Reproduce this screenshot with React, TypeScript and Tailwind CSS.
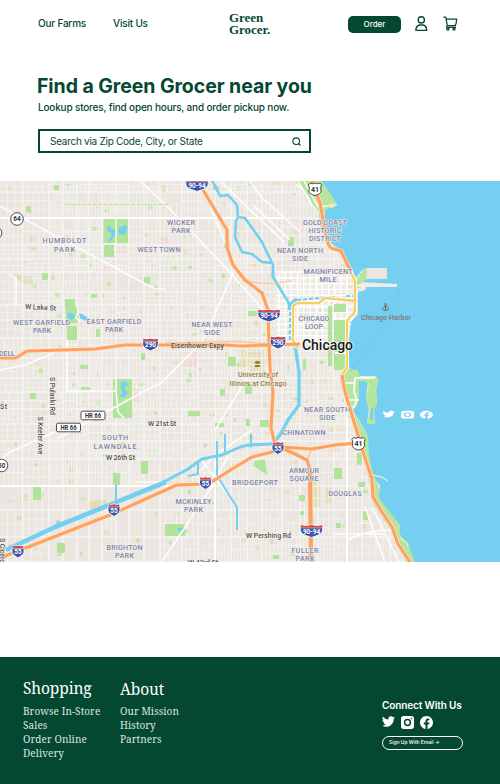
import React from "react";

const SANS = "font-['Inter','Liberation_Sans',sans-serif]";
const SERIF = "font-['Noto_Serif','DejaVu_Serif',serif]";

/* ---------- icons ---------- */

const TWITTER =
  "M23.95 4.57a10 10 0 0 1-2.82.77 4.96 4.96 0 0 0 2.16-2.72c-.95.55-2 .96-3.12 1.18a4.92 4.92 0 0 0-8.38 4.49C7.69 8.09 4.07 6.13 1.64 3.16a4.93 4.93 0 0 0 1.52 6.57 4.9 4.9 0 0 1-2.23-.61v.06c0 2.39 1.7 4.38 3.95 4.83a5 5 0 0 1-2.21.08 4.94 4.94 0 0 0 4.6 3.42A9.87 9.87 0 0 1 0 19.54a14 14 0 0 0 7.55 2.21c9.05 0 14-7.5 14-13.98l-.02-.64a9.9 9.9 0 0 0 2.42-2.56z";
const FACEBOOK =
  "M24 12.07C24 5.4 18.63 0 12 0S0 5.4 0 12.07C0 18.1 4.39 23.09 10.13 24v-8.44H7.08v-3.49h3.05V9.41c0-3.03 1.79-4.7 4.53-4.7 1.31 0 2.68.24 2.68.24v2.97h-1.51c-1.49 0-1.95.93-1.95 1.89v2.26h3.32l-.53 3.49h-2.79V24C19.61 23.09 24 18.1 24 12.07z";
const INSTAGRAM =
  "M5 0h14a5 5 0 0 1 5 5v14a5 5 0 0 1-5 5H5a5 5 0 0 1-5-5V5a5 5 0 0 1 5-5zM12 5.3a6.7 6.7 0 1 0 0 13.4 6.7 6.7 0 0 0 0-13.4zm0 2.7a4 4 0 1 1 0 8 4 4 0 0 1 0-8zM19.3 3.2a1.5 1.5 0 1 0 0 3 1.5 1.5 0 0 0 0-3z";

function Social({ d, className }: { d: string; className: string }) {
  return (
    <svg viewBox="0 0 24 24" preserveAspectRatio="none" className={className}>
      <path d={d} fill="#fff" fillRule="evenodd" />
    </svg>
  );
}

function UserIcon() {
  return (
    <svg width="13" height="16" viewBox="0 0 13 16" fill="none" stroke="#044832" strokeWidth="1.4">
      <circle cx="6.3" cy="3.900" r="3.100" />
      <path d="M4.500 9h3.600c2.300.6 3.600 2.600 3.600 5.400H.9C.9 11.600 2.200 9.600 4.500 9z" strokeLinejoin="round" />
    </svg>
  );
}

function CartIcon() {
  return (
    <svg width="15" height="15" viewBox="0 0 15 15" fill="none" stroke="#044832" strokeWidth="1.25" strokeLinecap="round" strokeLinejoin="round">
      <path d="M.8 1h2l1.500 8.500h8.200M3.200 3h10.600l-.8 4.900-1 1.600M4.300 9.500c-1.200.4-1.200 1.800 0 1.900h8.200" />
      <circle cx="4.800" cy="12.900" r="1.100" />
      <circle cx="11" cy="12.900" r="1.100" />
    </svg>
  );
}

/* ---------- map data ---------- */

function rng(seed: number) {
  let s = seed;
  return () => {
    s = (s * 16807) % 2147483647;
    return s / 2147483647;
  };
}

const rand = rng(4217);
const COLS = [0, 22.6, 49, 63, 77, 89, 102, 116, 129, 144, 160, 182, 198, 215, 231, 247, 262, 282, 300, 318, 334, 347, 362, 390, 415];
const ROWS = [181, 192, 218, 245, 259, 272, 292, 305, 320, 338, 358, 378, 392, 409, 424, 441, 459, 486, 510, 537, 562];

let streets = "";
const parks: { x: number; y: number; w: number; h: number; c: string }[] = [];
for (let i = 0; i < COLS.length - 1; i++) {
  for (let j = 0; j < ROWS.length - 1; j++) {
    const [x0, x1, y0, y1] = [COLS[i], COLS[i + 1], ROWS[j], ROWS[j + 1]];
    const industrial = (x0 < 160 && y0 > 480) || (x0 > 100 && x0 < 150 && y0 > 265 && y0 < 292);
    if (!industrial || rand() > 0.75) {
      const nx = 3 + Math.floor(rand() * 3);
      for (let k = 1; k < nx; k++) {
        const x = (x0 + ((x1 - x0) * k) / nx).toFixed(1);
        const a = y0 + (rand() > 0.75 ? (y1 - y0) * 0.4 : 0);
        streets += `M${x} ${a.toFixed(1)}V${y1}`;
      }
      const ny = 2 + Math.floor(rand() * 2);
      for (let k = 1; k < ny; k++) {
        streets += `M${x0} ${(y0 + ((y1 - y0) * k) / ny).toFixed(1)}H${x1}`;
      }
    }
    if (rand() > 0.5) {
      const t = rand();
      parks.push({
        x: x0 + rand() * (x1 - x0 - 5),
        y: y0 + rand() * (y1 - y0 - 5),
        w: 2 + rand() * 3.5,
        h: 2 + rand() * 3,
        c: t > 0.6 ? "#bfe6a8" : t > 0.12 ? "#e4dcb8" : "#efd9d5",
      });
    }
  }
}

const DOWNTOWN =
  Array.from({ length: 12 }, (_, i) => `M${279 + i * 6.2} 272V345`).join("") +
  Array.from({ length: 13 }, (_, i) => `M276 ${272 + i * 5.8}H356`).join("");

const GREENS: [number, number, number, number][] = [
  [103.5, 219, 24.5, 24], [104, 245, 10, 12], [65, 299, 10, 10], [26, 206, 5, 6],
  [54, 185, 5, 5], [42, 273, 6, 7], [144, 277, 6, 7], [91, 294, 6, 4], [66, 306, 12, 17], [67, 326, 10, 14],
  [113, 379, 19, 39], [30, 393, 6, 6], [80, 365, 8, 4], [81, 387, 9, 3], [141, 353, 4, 7], [96, 329, 4, 8],
  [33, 487, 8, 13], [113, 473, 7, 12], [141, 461, 7, 13], [57, 543, 8, 10], [165, 524, 20, 12],
  [224, 242, 6, 6], [213, 186, 6, 4], [248, 311, 9, 5], [228, 357, 8, 9], [245, 384, 7, 10],
  [220, 389, 5, 7], [188, 411, 12, 5], [246, 419, 4, 7], [215, 423, 9, 4], [260, 420, 9, 7], [299, 495, 6, 6],
  [300, 511, 4, 4], [328, 306, 4, 60], [334, 304, 12, 8], [334, 320, 12, 50], [334, 468, 8, 11], [357, 453, 5, 12],
  [358, 482, 7, 5], [363, 511, 5, 9], [336, 523, 5, 5], [288, 237, 6, 9], [303, 359, 3, 11], [273, 555, 6, 4],
];

const SANDS = [
  "M12 274l21 3v8c-9 0-15-5-21-10z", "M240 350h24v22h-14v-5h-10z", "M88 502l18-3v9l-18 4z", "M313 480h7v27h-8z",
  "M326 487h5v16h-5z", "M162 187h4v6h-4z", "M68 467h5v5h-5z", "M22 495h6v5h-6z", "M68 479h5v5h-5z",
];
const ROSE = ["M180 352h17v15h-17z", "M117 246h8v8h-8z", "M158 237h10v7h-10z", "M134 389h4v12h-4z", "M331 446h9v7h-9z"];

const LAKE =
  "M321 181L328 190 337 204 330 208 325 210 325 236 333 245 343 252 350 265 356 278 362 270 367 268H387V279H367L361 282 397 284 397 286.5 366 287V290L358 292V314L351 322 349 340 348 368 358 371 359 376H376L378 380 376 390 377 402 374 410 375 423H367L369 410 366 398 368 382H359L358 404 353 410 360 422 368 436 369 455 372 470 374 477 380 486 379 498 390 512 400 525V534L409 546 415 562H500V181Z";

const DIAGONALS =
  "M0 206L155 289H166M9 274L16 278V305M140 181L169 208M57 439L150 388 160 384 202 342 235 269M0 370L25 365 54 353M215 430L247 378M164 203L226 268 265 312M200 181L228 250M220 181L285 243M250 181L262 198 300 232M253 205L290 240M67 340V391H116V378M116 391L118 412 124 418M0 460L10 452 55 432M162 562L212 486 228 456M135 482H162M365 507L385 562M372 507L399 562M347 540C352 540 360 530 392 530M334 534H386M197 474L215 455 252 430M300 181L318 190M228 495L200 458M320 181L312 206 330 210";

const I94 = "M197 181L203 190 215 210 227 230 227 247 233 265 245 280 262 293 268 310 269 345 270 368 273 392 271 428 275 445 295 454 307 460 310 469 311 562";
const I290 = "M0 358H15C20 357 23 352 28 351L95 349 125 345H225L240 346 300 344";
const I55 = "M0 558L110 515 170 488 177 485 206 484 215 480 232 469 252 457 272 452 280 447 312 449 335 445 358 443";
const US41A = "M312 181L320 203 325 230 328 243Q329 248 334 249L341 251 350 270";
const US41B = "M342 375L345 392 358 435 363 452 372 479 373 497 380 509 392 527 398 544 410 562";
const YELLOW = "M349 269L355 281V308Q355 314 351 316L347 321V367L342 375M298 348L293 341V307Q294 303 300 303H319L325 298 356 301";

/* ---------- map markers ---------- */

function Interstate({ x, y, label, wide }: { x: number; y: number; label: string; wide?: boolean }) {
  const w = wide ? 11.5 : label.length > 2 ? 8 : 6;
  return (
    <g transform={`translate(${x} ${y})`}>
      <path
        d={`M${-w + 1} -6Q${-w / 2} -4.500 0 -6Q${w / 2} -4.500 ${w - 1} -6Q${w + 2} 2 ${w / 2} 4.500L0 6.500L${-w / 2} 4.500Q${-w - 2} 2 ${-w + 1} -6Z`}
        fill="#3c52a6"
        stroke="#fff"
        strokeWidth=".9"
      />
      <path d={`M${-w + 1} -5.800Q${-w / 2} -4.300 0 -5.800Q${w / 2} -4.300 ${w - 1} -5.800L${w - 0.5} -3.300H${-w + 0.5}Z`} fill="#d8403c" />
      <path d={`M${-w + 0.3} -3.100H${w - 0.3}`} stroke="#fff" strokeWidth=".5" />
      <text y="2.600" textAnchor="middle" fontSize="6.400" fontWeight="700" fill="#fff">{label}</text>
    </g>
  );
}

function Shield41({ x, y }: { x: number; y: number }) {
  return (
    <g transform={`translate(${x} ${y})`}>
      <path d="M-5-6Q-2.500-4.500 0-6 2.500-4.500 5-6L6.500-4Q5-1 6.200 2 5.500 5.500 0 6.500-5.500 5.500-6.200 2-5-1-6.500-4Z" fill="#fff" stroke="#4c4c4c" strokeWidth="1" />
      <text y="2.800" textAnchor="middle" fontSize="7" fontWeight="700" fill="#333">41</text>
    </g>
  );
}

function Circle({ x, y, label }: { x: number; y: number; label: string }) {
  return (
    <g transform={`translate(${x} ${y})`}>
      <circle r="6.300" fill="#fff" stroke="#4c4c4c" strokeWidth="1" />
      <text y="2.400" textAnchor="middle" fontSize="6.500" fontWeight="700" fill="#333">{label}</text>
    </g>
  );
}

function RouteBox({ x, y }: { x: number; y: number }) {
  return (
    <g transform={`translate(${x} ${y})`}>
      <rect x="-12" y="-4.300" width="24" height="8.600" rx="1.600" fill="#fff" stroke="#4c4c4c" strokeWidth="1" />
      <text y="2.500" textAnchor="middle" fontSize="6.500" fontWeight="700" fill="#333" textLength="16" lengthAdjust="spacingAndGlyphs">HR 66</text>
    </g>
  );
}

type Area = [string, number, number, number];
const AREAS: Area[] = [
  ["HUMBOLDT", 64.5, 243, 44], ["PARK", 64.5, 251.5, 21],
  ["WICKER", 181, 224.5, 28], ["PARK", 181, 232.5, 19],
  ["WEST TOWN", 159, 252, 43],
  ["GOLD COAST", 325, 225, 44], ["HISTORIC", 325, 233, 33], ["DISTRICT", 325, 241, 32],
  ["NEAR NORTH", 300, 253, 46], ["SIDE", 300, 261, 16],
  ["MAGNIFICENT", 328, 273.5, 49], ["MILE", 328, 281.5, 17],
  ["WEST GARFIELD", 41.5, 324.5, 57], ["PARK", 42, 332.5, 18],
  ["EAST GARFIELD", 114, 323.5, 55], ["PARK", 114, 331.5, 18],
  ["NEAR WEST", 212, 326.5, 41], ["SIDE", 212, 334.5, 16],
  ["CHICAGO", 314, 320.5, 31], ["LOOP", 314, 328.5, 18],
  ["SOUTH", 115, 440, 26], ["LAWNDALE", 115, 448.5, 43],
  ["NEAR SOUTH", 327, 412, 46], ["SIDE", 327, 420, 16],
  ["CHINATOWN", 304, 434.5, 43],
  ["BRIDGEPORT", 255, 484.5, 46],
  ["ARMOUR", 304, 473, 30], ["SQUARE", 304, 481, 29],
  ["DOUGLAS", 345, 496, 33],
  ["MCKINLEY", 193.5, 503.5, 36], ["PARK", 193.5, 511.5, 19],
  ["BRIGHTON", 124.5, 550, 36], ["PARK", 124.5, 558, 19],
  ["FULLER", 305, 553, 27], ["PARK", 305, 561, 19],
  ["DELL", 7, 356, 16],
];

const halo = { paintOrder: "stroke" as const, stroke: "#f3f0ec", strokeWidth: 1.2, strokeLinejoin: "round" as const };

function MapView() {
  return (
    <svg width="500" height="381" viewBox="0 181 500 381" className="block font-['Roboto','Noto_Sans',sans-serif]">
      <rect y="181" width="500" height="381" fill="#ebe7e0" />
      {parks.map((p, i) => (
        <rect key={i} x={p.x} y={p.y} width={p.w} height={p.h} fill={p.c} />
      ))}
      {SANDS.map((d) => <path key={d} d={d} fill="#e4dcb8" />)}
      {ROSE.map((d) => <path key={d} d={d} fill="#efd9d5" />)}
      <path d={streets} stroke="#f7f5f3" strokeWidth=".65" fill="none" />
      <g stroke="#fafafc" strokeWidth="1.1">
        {COLS.slice(1).map((x) => <path key={x} d={`M${x} 181V562`} />)}
        {ROWS.slice(1).map((y) => <path key={y} d={`M0 ${y}H420`} />)}
      </g>
      <path d={DOWNTOWN} stroke="#fff" strokeWidth="1.4" />
      {GREENS.map(([x, y, w, h]) => (
        <rect key={`${x}-${y}`} x={x} y={y} width={w} height={h} rx=".8" fill="#b1e39b" />
      ))}
      <path d="M255 461L265 459 267 475 254 466Z" fill="#b1e39b" />
      <path d="M0 218H285M0 486H215M215 455V562M347 375V562M328 343H347M335 353H347" stroke="#fff" strokeWidth="1.9" />
      <path d={DIAGONALS} stroke="#fdfdff" strokeWidth="1.6" fill="none" />
      <path d="M65 204.500H170" stroke="#b6e59e" strokeWidth="1" strokeDasharray="4 1.500" />

      {/* shoreline parks */}
      <path d="M296 181H321L331 192 337 204 328 210 327 236 321 230 318 210 310 202Z" fill="#b6e59e" />
      <path d="M298 181L312 205M304 181L318 207L328 206M296 184Q308 192 310 203" stroke="#fff" strokeWidth="1.500" fill="none" />
      <path d="M345 382L350 405 358 420 368 436 371 458 376 478 381 497 392 512 402 527 411 547 417 562H406L392 532 374 505 366 466 355 425 344 394Z" fill="#b6e59e" />
      <path d={LAKE} fill="#75cff1" />
      <path d="M326 206L331 203 338 205 332 208Z" fill="#ede6bd" />
      <path d="M348 368L358 370.500 360 377 377 377 378 382 376 391 377 403 374 411 375 424H367L370 411 366 398 369 383H360L358 404 353 410 347 397 343 376Z" fill="#b6e59e" />
      <path d="M359 381H366V410L362 415 357 407 359 397Z" fill="#75cff1" />
      <path d="M371 408H373V420H370Z" fill="#75cff1" />
      <path d="M367 269H387V279H367Z" fill="#ebe5de" />
      <path d="M357 279L363 270 367 269 366 280 361 283V288H357Z" fill="#b6e59e" />
      <path d="M357 285.500H397" stroke="#f1eeea" strokeWidth="2.300" />
      <path d="M344 383H354M375 378H355L354 392 357 400 354 407 350 409M348 400H359" stroke="#fff" strokeWidth="1.700" fill="none" />
      <path d="M398 291Q401 296 395 306L376 336 350 372" stroke="#63aedd" strokeWidth=".5" strokeDasharray="2 1.200" fill="none" />
      <path d="M373 244Q402 257 419 282V294" stroke="#8fd5f0" strokeWidth=".5" strokeDasharray="2 1.500" fill="none" />
      <path d="M373 475L382 477 388 481M400 538L407 543 408 547" stroke="#f1ebc3" strokeWidth="1.300" fill="none" />

      {/* park lagoons */}
      <path
        fill="#75cff1"
        d="M107 225l4 3 4 2 1 4-7 9-1-1 4-8-5-4zM119 228l3-1 1-2 4 1-1 7-4 2-4-2zM67 313l6 0 2 4-3 3-4-2zM79 313l5 2 4 3-3 3-5-3zM121 382l5-1 2 4-4 3 4 5-3 4-7 0 5-4-2-5zM177 528h7l-5 4z"
      />
      <path d="M77 306L78 312 76 318 80 322M116 218V243L115 250" stroke="#fff" strokeWidth="1.200" fill="none" />

      {/* river and canal */}
      <g fill="none" stroke="#75cff1" strokeLinejoin="round">
        <path d="M212 180L220 196 228 195 237 205 238 217 236 221 235 237 242 252 252 254 262 262 273 263" strokeWidth="2.600" />
        <path d="M238 217L245 218 262 242 273 265 273 277 290 305" strokeWidth="2.600" />
        <path d="M290 302V310M292 303L297 300" strokeWidth="4.500" />
        <path d="M297 300L320 298 335 297M346 296H358M290 306V342" strokeWidth="2.200" strokeDasharray="4 2" />
        <path d="M295 345L299 372V405L288 420 280 435 272 444" strokeWidth="3.400" />
        <path d="M272 444L248 445 240 447 222 455 202 459 188 469 160 484" strokeWidth="3" />
        <path d="M166 482L55 527 6 550" strokeWidth="4.600" />
        <path d="M217 441V475L227 492 237 507V530M225 434V452M251 434V447M116 485V502M198 463V474L188 476" strokeWidth="2" />
        <path d="M57 521l5 4" strokeWidth="2" />
      </g>

      {/* highways */}
      <g fill="none" strokeLinejoin="round">
        <path d={I94 + I290 + I55 + US41A + US41B} stroke="#fbe6d3" strokeWidth="4.400" />
        <path d={YELLOW} stroke="#fff" strokeWidth="4" />
        <path d="M243 280Q265 286 292 281M165 343L240 341.500 268 344M307 461L312 448" stroke="#ffbd86" strokeWidth="1.200" />
        <path d={YELLOW} stroke="#f3cf65" strokeWidth="2.400" />
        <path d={I94 + I290 + I55 + US41A + US41B} stroke="#ffa25f" strokeWidth="3.100" />
        <path d="M310 469L311 562" stroke="#ffa25f" strokeWidth="4.200" />
      </g>

      {/* neighbourhood labels */}
      <g fontSize="7.200" fontWeight="500" fill="#7d83a8" textAnchor="middle">
        {AREAS.map(([t, x, y, w]) => (
          <text key={`${t}${x}`} x={x} y={y} textLength={w} {...halo}>{t}</text>
        ))}
      </g>
      <g fontSize="7" fontWeight="500" fill="#50504f">
        <text x="25" y="309" textLength="31" transform="rotate(3 25 309)" {...halo}>W Lake St</text>
        <text x="171" y="347.500" textLength="53" paintOrder="stroke" stroke="#fbd9bb" strokeWidth=".8">Eisenhower Expy</text>
        <text x="148" y="426" textLength="28" {...halo}>W 21st St</text>
        <text x="106" y="460" textLength="29" {...halo}>W 26th St</text>
        <text x="0" y="409" textLength="7" {...halo}>St</text>
        <text x="246" y="538" textLength="45" {...halo}>W Pershing Rd</text>
        <text x="188" y="565" textLength="30" {...halo}>W 43rd St</text>
        <text transform="translate(50 377) rotate(90)" textLength="38" {...halo}>S Pulaski Rd</text>
        <text transform="translate(37.500 416.500) rotate(90)" textLength="38" {...halo}>S Keeler Ave</text>
        <text transform="translate(0 538) rotate(90)" textLength="38" {...halo}>S Cicero Ave</text>
      </g>
      <g fontSize="7.200" fontWeight="500" fill="#8e7b35" textAnchor="middle">
        <text x="258" y="377" textLength="40" {...halo}>University of</text>
        <text x="258" y="386" textLength="57" {...halo}>Illinois at Chicago</text>
        <path d="M254.500 362l3-1.200 3 1.200v1l-3 1.200-3-1.200zM255 365h5v2h-5z" />
      </g>
      <text x="386" y="319.500" textAnchor="middle" fontSize="7" fontWeight="500" fill="#85736e" textLength="50">Chicago Harbor</text>
      <g fill="none" stroke="#76645b" strokeWidth="1">
        <circle cx="385.500" cy="304.500" r="1" />
        <path d="M385.500 305.500V310M383.500 306.700H387.500M382 307.500Q382.500 310.500 385.500 310.500 388.500 310.500 389 307.500" />
      </g>
      <text x="302" y="349.500" fontSize="14" fontWeight="500" fill="#181818" textLength="51" paintOrder="stroke" stroke="#fff" strokeWidth="1.200">Chicago</text>

      <Interstate x={197} y={185} label="90-94" wide />
      <Interstate x={269} y={315.5} label="90-94" wide />
      <Interstate x={311.5} y={531} label="90-94" wide />
      <Interstate x={150.5} y={344.5} label="290" />
      <Interstate x={278} y={342.5} label="290" />
      <Interstate x={278} y={448} label="55" />
      <Interstate x={205.5} y={483} label="55" />
      <Interstate x={114} y={510} label="55" />
      <Interstate x={18} y={551.5} label="55" />
      <Shield41 x={315} y={189} />
      <Shield41 x={358.5} y={443.5} />
      <Circle x={17} y={219} label="64" />
      <Circle x={-4.5} y={233} label="" />
      <Circle x={1.5} y={465.5} label="50" />
      <RouteBox x={93} y={415.5} />
      <RouteBox x={68.5} y={427.5} />

      {/* social links over the lake */}
      <g fill="#fff" fillRule="evenodd">
        <path transform="translate(382.500 410) scale(.52 .34)" d={TWITTER} />
        <path transform="translate(401 410.700) scale(.54 .33)" d={INSTAGRAM} />
        <path transform="translate(420 410.700) scale(.54 .33)" d={FACEBOOK} />
      </g>
    </svg>
  );
}

/* ---------- page ---------- */

function Header() {
  return (
    <header className="flex h-[46px] items-start pl-[38px] text-[#044832]">
      <nav className="flex pt-[15px] text-[10px] leading-4 font-medium tracking-[-0.2px]">
        <a className="w-[75px]">Our Farms</a>
        <a className="w-[116px]">Visit Us</a>
      </nav>
      <div className="flex w-[119px] flex-col pt-[12px] font-['Liberation_Serif',serif] text-[13px] leading-[11.5px] font-bold tracking-[-0.05px]">
        <span>Green</span>
        <span>Grocer.</span>
      </div>
      <button className="mt-4 h-[17px] w-[53px] rounded-[5px] bg-[#044832] text-[8px] leading-[17px] font-medium text-white">Order</button>
      <div className="mt-4 ml-[14px] flex gap-[15px]">
        <UserIcon />
        <CartIcon />
      </div>
    </header>
  );
}

function Search() {
  return (
    <section className="flex h-[135px] flex-col pt-[27px] pl-[37px] text-[#044832]">
      <h1 className="text-[19.5px] leading-[26px] font-bold tracking-[-0.07px] whitespace-nowrap">Find a Green Grocer near you</h1>
      <p className="pl-px text-[10px] leading-[16px] font-medium tracking-[-0.18px] whitespace-nowrap">Lookup stores, find open hours, and order pickup now.</p>
      <div className="mt-[14px] ml-px flex h-6 w-[273px] items-center justify-between border-2 border-[#044832] pr-[8px] pl-[10px] text-[10px] tracking-[-0.27px]">
        <span>Search via Zip Code, City, or State</span>
        <svg width="9" height="9" viewBox="0 0 9 9" fill="none" stroke="#044832" strokeWidth="1.1">
          <circle cx="4.200" cy="4.200" r="3.300" />
          <path d="M6.600 6.600L8.500 8.500" />
        </svg>
      </div>
    </section>
  );
}

function Footer() {
  return (
    <footer className="flex h-[127px] bg-[#044832] pl-[23px] text-white">
      <div className={`${SERIF} w-[97px] pt-[21px]`}>
        <h2 className="text-[15.5px] leading-5 tracking-[-0.12px] whitespace-nowrap">Shopping</h2>
        <ul className="pt-[6px] text-[10px] leading-[14px] tracking-[0.08px] whitespace-nowrap text-[#dce5e1]">
          <li>Browse In-Store</li>
          <li>Sales</li>
          <li>Order Online</li>
          <li>Delivery</li>
        </ul>
      </div>
      <div className={`${SERIF} w-[262px] pt-[22px]`}>
        <h2 className="text-[15.5px] leading-5 tracking-[-0.12px]">About</h2>
        <ul className="pt-[5px] text-[10px] leading-[14px] tracking-[0.08px] text-[#dce5e1]">
          <li>Our Mission</li>
          <li>History</li>
          <li>Partners</li>
        </ul>
      </div>
      <div className="pt-[41px]">
        <h3 className="text-[10px] leading-[14px] font-semibold tracking-[-0.11px] whitespace-nowrap">Connect With Us</h3>
        <div className="mt-[3px] flex gap-[6px]">
          <Social d={TWITTER} className="h-[13px] w-[13px]" />
          <Social d={INSTAGRAM} className="mt-px h-[13px] w-[13px]" />
          <Social d={FACEBOOK} className="mt-px h-[13px] w-[13px]" />
        </div>
        <div className="mt-[7px] flex h-[14px] w-[81px] items-center rounded-full border border-white pl-[6px] text-[5px] font-medium tracking-[-0.04px] whitespace-nowrap">
          Sign Up With Email →
        </div>
      </div>
    </footer>
  );
}

export default function App() {
  return (
    <div className={`${SANS} flex h-[784px] w-[500px] flex-col overflow-hidden bg-white`}>
      <Header />
      <Search />
      <MapView />
      <div className="h-[95px]" />
      <Footer />
    </div>
  );
}
